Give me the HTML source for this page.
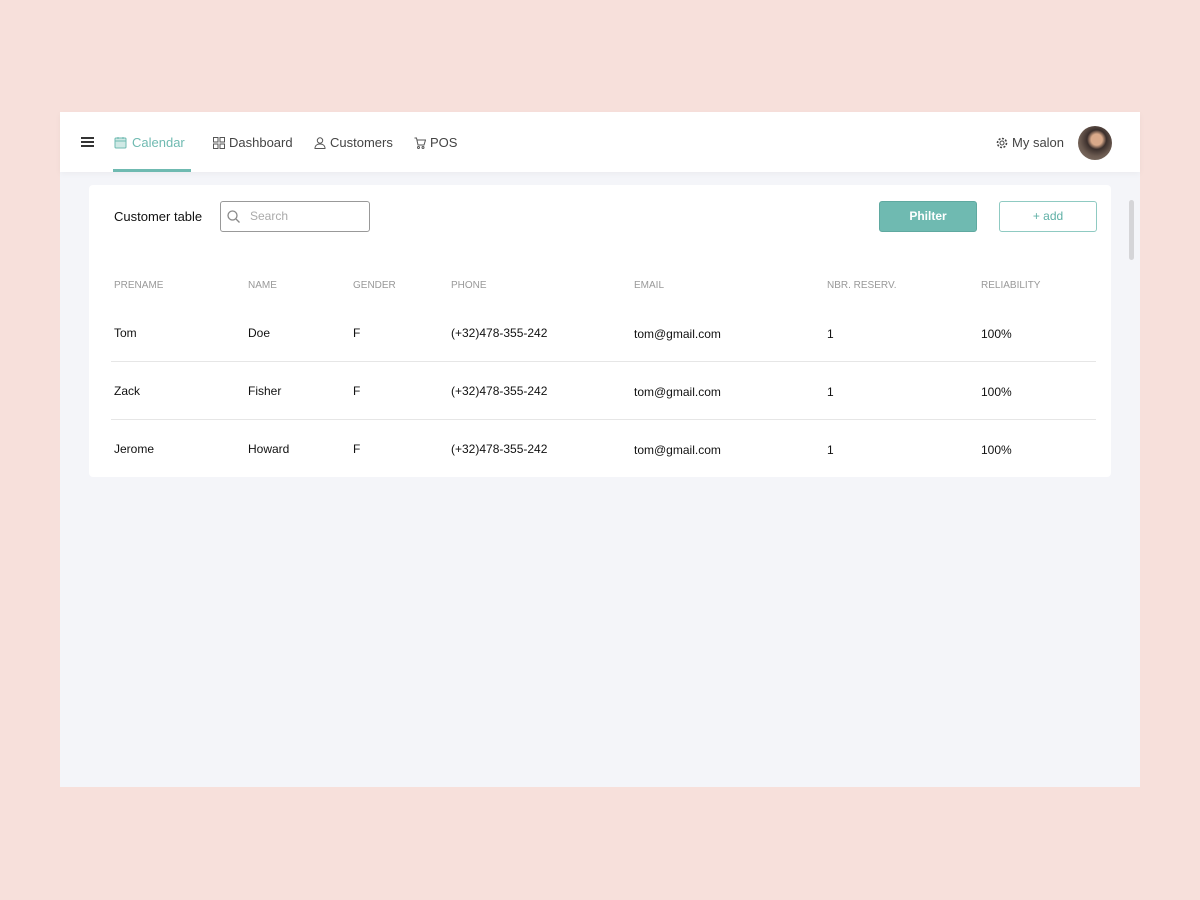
<!DOCTYPE html>
<html><head><style>
*{margin:0;padding:0;box-sizing:border-box}
body{width:1200px;height:900px;background:#f7e0db;font-family:"Liberation Sans",sans-serif;position:relative;overflow:hidden}
.app{position:absolute;left:60px;top:112px;width:1080px;height:675px;background:#f4f5f9}
.hdr{position:absolute;left:0;top:0;width:1080px;height:60px;background:#fff;box-shadow:0 2px 6px rgba(0,0,0,0.04)}
.t{position:absolute;white-space:nowrap}
.nav{font-size:13px;color:#444;top:23px}
.card{position:absolute;left:29px;top:73px;width:1022px;height:292px;background:#fff;border-radius:4px}
.th{font-size:10px;color:#999;top:168px}
.td{font-size:12px;color:#111}
.sep{position:absolute;left:51px;width:985px;height:1px;background:#e6e6e6}
</style></head><body>
<div class="app">
<div class="hdr">
  <div style="position:absolute;left:21px;top:25px;width:13px;height:2px;background:#333;box-shadow:0 4px 0 #333,0 8px 0 #333"></div>
  <svg class="t" style="left:54px;top:24px" width="13" height="13" viewBox="0 0 13 13"><rect x="1" y="2" width="11" height="10" rx="1" fill="#cfe9e5" stroke="#6fbab1"/><line x1="1" y1="5" x2="12" y2="5" stroke="#6fbab1"/><line x1="4" y1="1" x2="4" y2="3" stroke="#6fbab1"/><line x1="9" y1="1" x2="9" y2="3" stroke="#6fbab1"/></svg>
  <div class="t nav" style="left:72px;color:#6fbab1">Calendar</div>
  <div style="position:absolute;left:53px;top:57px;width:78px;height:3px;background:#6fbab1"></div>
  <svg class="t" style="left:153px;top:25px" width="12" height="12" viewBox="0 0 12 12" fill="none" stroke="#555"><rect x="0.5" y="0.5" width="4.5" height="4.5"/><rect x="7" y="0.5" width="4.5" height="4.5"/><rect x="0.5" y="7" width="4.5" height="4.5"/><rect x="7" y="7" width="4.5" height="4.5"/></svg>
  <div class="t nav" style="left:169px">Dashboard</div>
  <svg class="t" style="left:254px;top:25px" width="12" height="12" viewBox="0 0 12 12" fill="none" stroke="#555"><circle cx="6" cy="3.5" r="2.7"/><path d="M1 11.5c0-3 2.2-4.5 5-4.5s5 1.5 5 4.5z"/></svg>
  <div class="t nav" style="left:270px">Customers</div>
  <svg class="t" style="left:354px;top:25px" width="12" height="12" viewBox="0 0 12 12" fill="none" stroke="#555"><path d="M0.5 1h2l1.5 7h6l1.5-5H3"/><circle cx="4.5" cy="10.5" r="1"/><circle cx="9" cy="10.5" r="1"/></svg>
  <div class="t nav" style="left:370px">POS</div>
  <svg class="t" style="left:936px;top:25px" width="12" height="12" viewBox="0 0 12 12" fill="none" stroke="#444"><circle cx="6" cy="6" r="2"/><circle cx="6" cy="6" r="4.5" stroke-dasharray="2 1.5" stroke-width="1.6"/></svg>
  <div class="t nav" style="left:952px">My salon</div>
  <div style="position:absolute;left:1018px;top:14px;width:34px;height:34px;border-radius:50%;background:radial-gradient(circle at 55% 40%,#d9a98a 0 20%,#3b2f2c 35%,#6b5a50 60%,#8a7b70)"></div>
</div>
<div style="position:absolute;left:1069px;top:88px;width:5px;height:60px;border-radius:3px;background:#d5d5d8"></div>
<div class="card">
  <div class="t" style="left:25px;top:24px;font-size:13px;color:#111">Customer table</div>
  <div style="position:absolute;left:131px;top:16px;width:150px;height:31px;border:1px solid #999;border-radius:3px"></div>
  <svg class="t" style="left:138px;top:25px" width="13" height="13" viewBox="0 0 13 13" fill="none" stroke="#888" stroke-width="1.3"><circle cx="5.5" cy="5.5" r="4.5"/><line x1="9" y1="9" x2="12.5" y2="12.5"/></svg>
  <div class="t" style="left:161px;top:24px;font-size:12px;color:#aaa">Search</div>
  <div style="position:absolute;left:790px;top:16px;width:98px;height:31px;background:#6fbab1;border:1px solid #5fa9a0;border-radius:3px;color:#fff;font-size:12px;font-weight:bold;text-align:center;line-height:29px">Philter</div>
  <div style="position:absolute;left:910px;top:16px;width:98px;height:31px;border:1px solid #8fcac2;border-radius:3px;color:#5fb0a6;font-size:12px;text-align:center;line-height:29px">+ add</div>
</div>
<div class="sep" style="top:249px"></div>
<div class="sep" style="top:307px"></div>
<div class="t th" style="left:54px">PRENAME</div><div class="t th" style="left:188px">NAME</div><div class="t th" style="left:293px">GENDER</div><div class="t th" style="left:391px">PHONE</div><div class="t th" style="left:574px">EMAIL</div><div class="t th" style="left:767px">NBR. RESERV.</div><div class="t th" style="left:921px">RELIABILITY</div>
<div class="t td" style="left:54px;top:214px">Tom</div><div class="t td" style="left:188px;top:214px">Doe</div><div class="t td" style="left:293px;top:214px">F</div><div class="t td" style="left:391px;top:214px">(+32)478-355-242</div><div class="t td" style="left:574px;top:215px">tom@gmail.com</div><div class="t td" style="left:767px;top:215px">1</div><div class="t td" style="left:921px;top:215px">100%</div>
<div class="t td" style="left:54px;top:272px">Zack</div><div class="t td" style="left:188px;top:272px">Fisher</div><div class="t td" style="left:293px;top:272px">F</div><div class="t td" style="left:391px;top:272px">(+32)478-355-242</div><div class="t td" style="left:574px;top:273px">tom@gmail.com</div><div class="t td" style="left:767px;top:273px">1</div><div class="t td" style="left:921px;top:273px">100%</div>
<div class="t td" style="left:54px;top:330px">Jerome</div><div class="t td" style="left:188px;top:330px">Howard</div><div class="t td" style="left:293px;top:330px">F</div><div class="t td" style="left:391px;top:330px">(+32)478-355-242</div><div class="t td" style="left:574px;top:331px">tom@gmail.com</div><div class="t td" style="left:767px;top:331px">1</div><div class="t td" style="left:921px;top:331px">100%</div>
</div>
</body></html>
